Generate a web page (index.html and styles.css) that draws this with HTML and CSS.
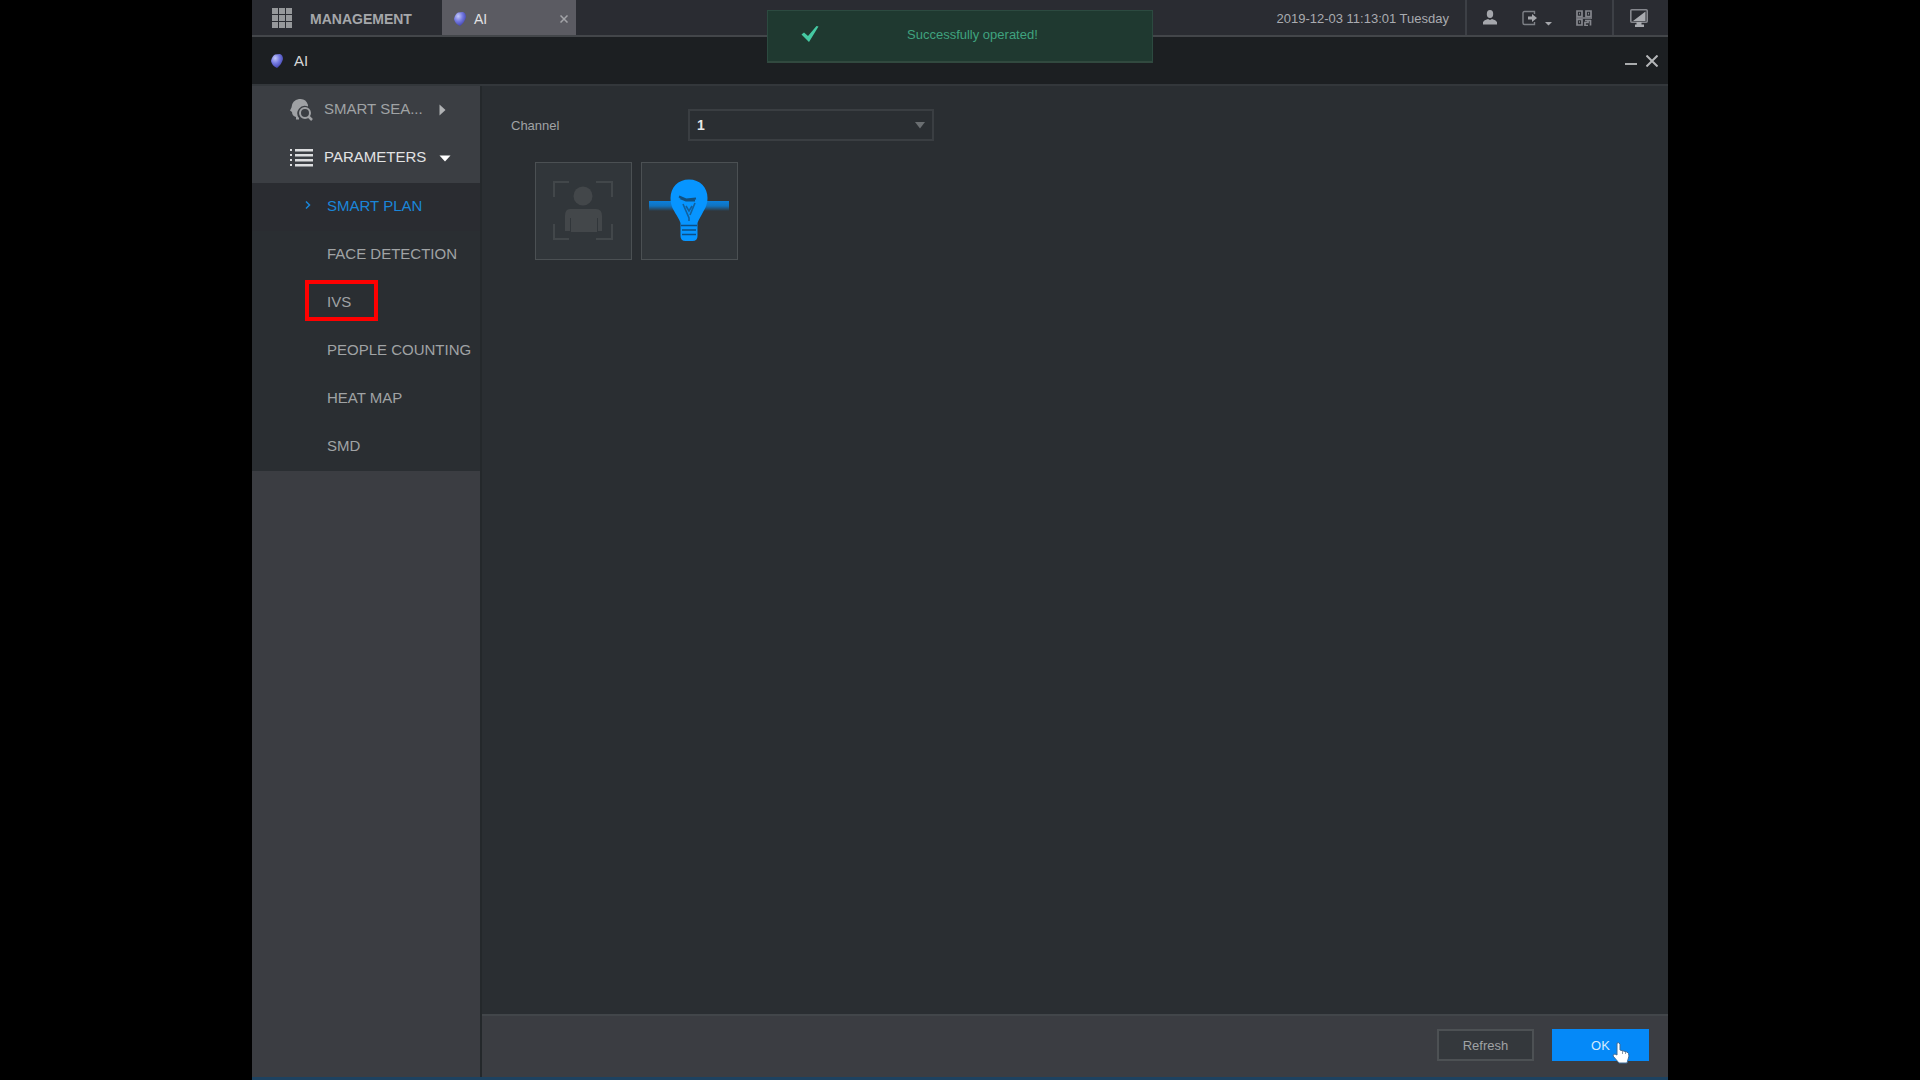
FILE: index.html
```html
<!DOCTYPE html>
<html lang="en">
<head>
    <meta charset="UTF-8">
    <meta name="viewport" content="width=device-width, initial-scale=1.0">
    <title>AI - Smart Plan</title>
    <link rel="stylesheet" href="styles.css">
</head>
<body>

<div class="app">
    <header class="topbar">
        <button type="button" class="management">
            <svg width="20" height="20" viewBox="0 0 20 20" fill="#96989b">
                <path d="M0 0h6v6H0zM7 0h6v6H7zM14 0h6v6h-6zM0 7h6v6H0zM7 7h6v6H7zM14 7h6v6h-6zM0 14h6v6H0zM7 14h6v6H7zM14 14h6v6h-6z"/>
            </svg>
            <span>MANAGEMENT</span>
        </button>
        <div class="tab">
            <svg width="12" height="16" viewBox="0 0 12 16">
                <defs>
                    <radialGradient id="gem" cx="35%" cy="30%" r="75%">
                        <stop offset="0" stop-color="#c3c8fa"/>
                        <stop offset="0.5" stop-color="#7378e0"/>
                        <stop offset="1" stop-color="#3d3fa8"/>
                    </radialGradient>
                </defs>
                <path d="M4 1.500L9 1Q12 2 12 6Q11 11 6 15Q1 13 0 8Q1 3 4 1.500z" fill="url(#gem)"/>
            </svg>
            <span>AI</span>
            <button type="button" class="icon-button tab-close" aria-label="Close tab">
                <svg width="8" height="8" viewBox="0 0 8 8" stroke="#a3a4a8" stroke-width="1.500"><path d="M0.500 0.500l7 7M7.500 0.500l-7 7"/></svg>
            </button>
        </div>
        <time class="clock" datetime="2019-12-03T11:13:01">2019-12-03 11:13:01 Tuesday</time>
        <div class="tools">
            <button type="button" class="icon-button" aria-label="User">
                <svg width="14" height="15" viewBox="0 0 14 15" fill="#a5a7ac">
                    <ellipse cx="7" cy="4" rx="3.200" ry="4"/>
                    <path d="M0 14.500V12Q1 10 5 9l2 1 2-1q4 1 5 3v2.500z"/>
                </svg>
            </button>
            <button type="button" class="icon-button" aria-label="Log out">
                <svg width="30" height="16" viewBox="0 0 30 16">
                    <path d="M12.500 4V1.500H2.500Q1 1.500 1 3v10q0 1.500 1.500 1.500h10V12" fill="none" stroke="#7e8187" stroke-width="1.400"/>
                    <path d="M6 6.600h4V4l5 4-5 4V9.400H6zM23 12h7l-3.500 3.500z" fill="#a5a7ac"/>
                </svg>
            </button>
            <button type="button" class="icon-button" aria-label="QR code">
                <svg width="16" height="16" viewBox="0 0 16 16" fill="none" stroke="#85878d" stroke-width="1.700">
                    <path d="M1 1h5v5.500H1zM10 1h5v5.500h-5zM1 9.500h5V15H1z"/>
                    <path d="M3 3.700h1M12 3.700h1M3 12h1M0 8h16M9 10.500h3v2H9v3h3M14.500 10v5.500M12 10.500h3"/>
                </svg>
            </button>
        </div>
        <div class="tools tools-last">
            <button type="button" class="icon-button" aria-label="Display">
                <svg width="18" height="18" viewBox="0 0 18 18">
                    <rect x="0.800" y="0.800" width="16.400" height="12.400" rx="1" fill="none" stroke="#85878d" stroke-width="1.600"/>
                    <path d="M3 12L15.500 2.500V12zM6.500 13h5v2.500H14V18H5v-2.500h1.500z" fill="#a9abb0"/>
                </svg>
            </button>
        </div>
    </header>

    <div class="titlebar">
        <svg width="12" height="16" viewBox="0 0 12 16">
            <path d="M4 1.500L9 1Q12 2 12 6Q11 11 6 15Q1 13 0 8Q1 3 4 1.500z" fill="url(#gem)"/>
        </svg>
        <h1>AI</h1>
        <div class="window-buttons">
            <button type="button" class="icon-button" aria-label="Minimize">
                <svg width="12" height="12" viewBox="0 0 12 12" stroke="#a9abad" stroke-width="2"><path d="M0 9h12"/></svg>
            </button>
            <button type="button" class="icon-button" aria-label="Close">
                <svg width="12" height="12" viewBox="0 0 12 12" stroke="#b4b6b8" stroke-width="2"><path d="M0.500 0.500l11 11M11.500 0.500l-11 11"/></svg>
            </button>
        </div>
    </div>

    <div class="main">
        <nav class="sidebar">
            <div class="menu">
                <a href="#" class="menu-item">
                    <svg width="24" height="24" viewBox="0 0 24 24">
                        <path d="M10 1Q17 0 19 7V8.500A7.500 7.500 0 0 0 10 20v1.500H7V19Q3 18 3 14L1 12.500l1.500-3Q3 2 10 1z" fill="#9fa1a4"/>
                        <circle cx="16" cy="15" r="5" fill="none" stroke="#9fa1a4" stroke-width="2"/>
                        <path d="M19.500 18.500L23 22" stroke="#9fa1a4" stroke-width="2.500"/>
                    </svg>
                    <span class="menu-name">SMART SEA...</span>
                    <svg width="7" height="12" viewBox="0 0 7 12"><path d="M0.500 0.500L6.500 6l-6 5.500z" fill="#b0b2b4"/></svg>
                </a>
                <a href="#" class="menu-item open">
                    <svg width="24" height="20" viewBox="0 0 24 20" fill="#dcdddf">
                        <path d="M1 1h2v2H1zM1 6h2v2H1zM1 11h2v2H1zM1 16h2v2H1zM6 1h18v2.500H6zM6 6h18v2.500H6zM6 11h18v2.500H6zM6 16h18v2.500H6z"/>
                    </svg>
                    <span class="menu-name">PARAMETERS</span>
                    <svg width="12" height="7" viewBox="0 0 12 7"><path d="M0.500 0.500h11L6 6.500z" fill="#fff"/></svg>
                </a>
            </div>
            <div class="submenu">
                <a href="#" class="active">
                    <svg width="6" height="8" viewBox="0 0 6 8" fill="none" stroke="#1a86d9" stroke-width="1.500"><path d="M1 0.500L4.500 4 1 7.500"/></svg>
                    SMART PLAN
                </a>
                <a href="#">FACE DETECTION</a>
                <a href="#" class="marked">IVS</a>
                <a href="#">PEOPLE COUNTING</a>
                <a href="#">HEAT MAP</a>
                <a href="#">SMD</a>
            </div>
        </nav>

        <div class="content">
            <div class="panel">
                <div class="field">
                    <label for="channel">Channel</label>
                    <div class="select-box">
                        <select id="channel">
                            <option>1</option>
                        </select>
                        <svg class="select-arrow" width="12" height="8" viewBox="0 0 12 8"><path d="M1 1h10L6 7.500z" fill="#6a6e71"/></svg>
                    </div>
                </div>
                <div class="plans">
                    <button type="button" class="plan" aria-label="Face detection">
                        <svg width="95" height="96" viewBox="0 0 95 96">
                            <path d="M18 34V19h15M60 19h16v15M18 61v15h15M60 76h16V61" fill="none" stroke="#42474a" stroke-width="2"/>
                            <circle cx="47" cy="33" r="9.500" fill="#43474a"/>
                            <path d="M34 46h26q6 0 6 7v15h-4V55h-1v14H35V55h-1v13h-5V53q0-7 5-7z" fill="#43474a"/>
                        </svg>
                    </button>
                    <button type="button" class="plan" aria-label="IVS">
                        <svg width="95" height="96" viewBox="0 0 95 96">
                            <defs>
                                <linearGradient id="beam" x1="0" y1="0" x2="0" y2="1">
                                    <stop offset="0" stop-color="#0b80dc"/>
                                    <stop offset="0.500" stop-color="#1172bd"/>
                                    <stop offset="1" stop-color="#31363a"/>
                                </linearGradient>
                            </defs>
                            <path d="M7 38h80v10H7z" fill="url(#beam)"/>
                            <path d="M47 16.500c11 0 18.500 8 18.500 18.500 0 8-3.500 12-6 17q-3 5-4 8v13q0 5-5 5h-7q-5 0-5-5V60q-1-3-4-8c-3-5-6-9-6-17 0-10.500 7.500-18.500 18.500-18.500z" fill="#0795ff"/>
                            <path d="M37 33.500l7 3 10-1M38 35l6 2.500h9" fill="none" stroke="#12507f" stroke-width="2"/>
                            <path d="M41 41l6 14v3M53 40l-5 12M44 43l3 5 3-5" fill="none" stroke="#12609d" stroke-width="1.600"/>
                            <path d="M39 62.500h16M40 67h14M40 71.500h14" stroke="#0b4f87" stroke-width="1.700"/>
                        </svg>
                    </button>
                </div>
            </div>
            <footer class="actions">
                <button type="button" class="btn">Refresh</button>
                <button type="button" class="btn btn-primary">OK
                    <svg class="pointer" width="18" height="22" viewBox="0 0 18 22">
                        <path d="M5 1q2-1 3 1v6l7 2q2 1 2 4l-2 7H7l-6-7q0-2 2-2l2 1z" fill="#fff" stroke="#3c6c99" stroke-width="1"/>
                        <path d="M10.500 9v3M13.500 10v2" stroke="#8a9aab" stroke-width="1"/>
                    </svg>
                </button>
            </footer>
        </div>
    </div>

    <div class="toast" role="status">
        <svg width="18" height="18" viewBox="0 0 18 18"><path d="M0.500 9.500L3 7.500l4 3.500L15.500 1 17.500 1.500 8 17z" fill="#45c9a2"/></svg>
        <span>Successfully operated!</span>
    </div>
</div>

</body>
</html>
```

FILE: styles.css
```css
*, *::after {
    box-sizing: border-box;
}
body {
    margin: 0;
    background-color: #000;
    font-family: "Liberation Sans", Arial, sans-serif;
    font-size: 13px;
    color: #a0a3a5;
}
a {
    color: inherit;
    text-decoration: none;
}
button, select {
    font-family: inherit;
    font-size: 13px;
    color: inherit;
    cursor: pointer;
}
svg {
    display: block;
    flex: none;
}
.app {
    position: relative;
    display: flex;
    flex-direction: column;
    max-width: 1416px;
    min-height: 100vh;
    margin: 0 auto;
    background-color: #2a2e32;
    border-bottom: 3px solid #1d4260;
}

/* top bar */
.topbar {
    display: flex;
    align-items: stretch;
    height: 37px;
    background-color: #2a2c32;
    border-bottom: 2px solid #43464a;
}
.management {
    display: flex;
    align-items: center;
    gap: 18px;
    width: 190px;
    padding: 0 20px;
    border: none;
    background: none;
    font-size: 14px;
    font-weight: bold;
    color: #a5a7aa;
}
.management span {
    padding-top: 3px;
}
.tab {
    display: flex;
    align-items: center;
    gap: 8px;
    width: 134px;
    padding: 2px 8px 0 12px;
    background-color: #5b5b62;
    color: #e2e2e4;
    font-size: 14px;
}
.icon-button {
    padding: 0;
    border: none;
    background: none;
}
.tab-close {
    margin-left: auto;
}
.clock {
    margin-left: auto;
    padding-right: 16px;
    line-height: 37px;
    font-size: 13px;
    color: #a9abb0;
}
.tools {
    display: flex;
    align-items: center;
    justify-content: space-between;
    width: 147px;
    padding: 0 20px 0 16px;
    border-left: 2px solid #3d4046;
}
.tools-last {
    width: 56px;
    padding: 0 20px 0 16px;
}

/* title bar */
.titlebar {
    display: flex;
    align-items: center;
    gap: 11px;
    height: 49px;
    padding: 0 10px 0 19px;
    background-color: #1c1f22;
    border-bottom: 2px solid #33373b;
}
.titlebar h1 {
    margin: 0;
    font-size: 15px;
    font-weight: normal;
    color: #d5d6d7;
}
.window-buttons {
    display: flex;
    gap: 9px;
    margin-left: auto;
}

/* side menu */
.main {
    display: flex;
    flex: 1;
}
.sidebar {
    flex: none;
    width: 230px;
    background-color: #3b3d42;
    border-right: 2px solid #24282b;
    font-size: 15px;
}
.menu {
    padding-bottom: 1px;
    background-color: #3b3e43;
}
.menu-item {
    display: flex;
    align-items: center;
    height: 48px;
    padding-left: 37px;
}
.menu-name {
    width: 108px;
    margin: 0 7px 0 11px;
    padding-bottom: 3px;
    white-space: nowrap;
}
.menu-item.open {
    color: #e2e3e4;
}
.submenu {
    background-color: #2a2e32;
}
.submenu a {
    position: relative;
    display: flex;
    align-items: center;
    height: 48px;
    padding: 0 0 4px 75px;
    white-space: nowrap;
}
.submenu .active {
    gap: 16px;
    padding-left: 53px;
    background-color: #2a2c31;
    color: #1a86d9;
}
.marked::after {
    content: "";
    position: absolute;
    left: 53px;
    top: 1px;
    width: 73px;
    height: 41px;
    border: 4px solid #f00;
}

/* content */
.content {
    display: flex;
    flex-direction: column;
    flex: 1;
}
.panel {
    flex: 1;
    padding: 23px 29px;
}
.field {
    display: flex;
    align-items: center;
}
.field label {
    width: 177px;
}
.select-box {
    position: relative;
}
.select-box select {
    appearance: none;
    display: block;
    width: 246px;
    height: 32px;
    padding: 0 7px;
    border: 2px solid #3a3e42;
    border-radius: 0;
    background-color: #2a2e32;
    color: #e8e8e8;
    font-size: 14px;
    font-weight: bold;
}
.select-arrow {
    position: absolute;
    right: 8px;
    top: 12px;
    pointer-events: none;
}
.plans {
    display: flex;
    gap: 9px;
    padding: 21px 24px;
}
.plan {
    padding: 0;
    border: 1px solid #4b5053;
    background-color: #31363a;
}
.actions {
    display: flex;
    justify-content: flex-end;
    gap: 18px;
    padding: 13px 19px 16px;
    background-color: #3b3d42;
    border-top: 2px solid #42464a;
}
.btn {
    position: relative;
    width: 97px;
    height: 32px;
    border: 2px solid #4d5154;
    background-color: #34383c;
}
.btn-primary {
    border: none;
    background-color: #0589f8;
    color: #d4e9fc;
}
.pointer {
    position: absolute;
    left: 60px;
    top: 13px;
}

/* message */
.toast {
    position: absolute;
    top: 10px;
    left: 50%;
    display: flex;
    align-items: center;
    gap: 88px;
    width: 386px;
    height: 53px;
    padding: 0 33px 4px;
    transform: translateX(-50%);
    background-color: #1f3930;
    border: 1px solid #2c4a40;
    border-bottom: 2px solid #31493f;
    color: #3fa37f;
}
```
